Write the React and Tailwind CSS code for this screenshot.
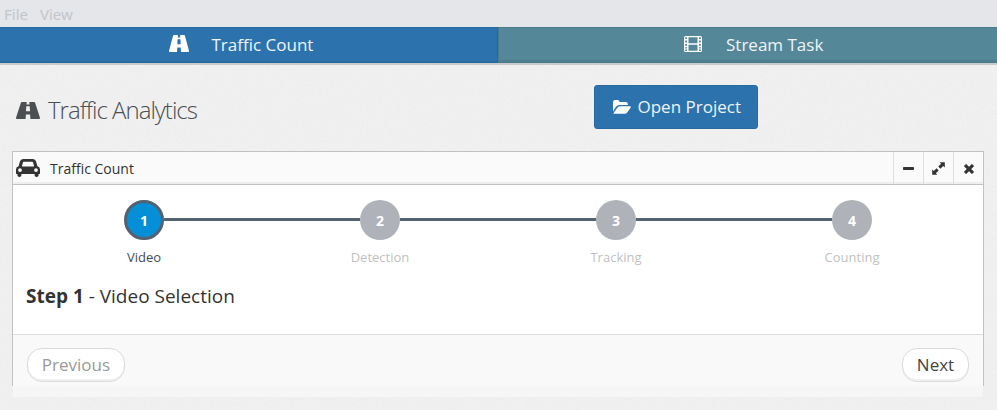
const RoadIcon = ({ className }) => (
  <svg viewBox="0 0 24 17" preserveAspectRatio="none" fill="currentColor" className={className}>
    <path
      fillRule="evenodd"
      d="M5.9 0H10.7L10.5 2.6H13.5L13.3 0H18.1Q18.8 0 19.1 .7L23.9 15.6Q24.2 17 23.2 17H14.4L14.1 12.6H9.9L9.6 17H.8Q-.2 17 .1 15.6L4.9 .7Q5.2 0 5.9 0ZM10.3 4.3L10 8.7Q10 9.3 10.5 9.3H13.5Q14 9.3 14 8.7L13.7 4.3Z"
    />
  </svg>
);

const FilmIcon = ({ className }) => (
  <svg viewBox="0 0 18 16" fill="currentColor" className={className}>
    <path
      fillRule="evenodd"
      d="M1.5 0H16.5Q18 0 18 1.5V14.5Q18 16 16.5 16H1.5Q0 16 0 14.5V1.5Q0 0 1.5 0ZM1.2 1.3V3.1H3V1.3ZM1.2 4.6V6.4H3V4.6ZM1.2 7.9V9.7H3V7.9ZM1.2 11.2V12.5H3V11.2ZM1.2 13.6V15H3V13.6ZM15 1.3V3.1H16.8V1.3ZM15 4.6V6.4H16.8V4.6ZM15 7.9V9.7H16.8V7.9ZM15 11.2V12.5H16.8V11.2ZM15 13.6V15H16.8V13.6ZM4.5 1.3V7.2H13.5V1.3ZM4.5 8.7V14.8H13.5V8.7Z"
    />
  </svg>
);

const FolderIcon = ({ className }) => (
  <svg viewBox="0 0 18 14" fill="currentColor" className={className}>
    <path d="M0 11.6V2Q0 0 2 0H4.6Q6.5 0 6.5 2H12.8Q14.8 2 14.8 4V5H6.5Q4.4 5 3 6.7Z" />
    <path d="M.5 13.2L4.1 8.1Q5.3 6.3 7.2 6.3H17.2Q18.4 6.3 17.7 7.4L14.6 11.9Q13.3 13.8 11.3 13.8H1Q.1 13.8 .5 13.2Z" />
  </svg>
);

const CarIcon = ({ className }) => (
  <svg viewBox="0 0 24 18" fill="currentColor" className={className}>
    <path
      fillRule="evenodd"
      d="M7.2 0H16.8Q19.4 0 20.1 2.6L21.4 7.3Q24 7.8 24 10.5V14.6Q24 15 23.5 15H22.6V16.2Q22.6 18 20.6 18T18.6 16.2V15H5.4V16.2Q5.4 18 3.4 18T1.4 16.2V15H.5Q0 15 0 14.6V10.5Q0 7.8 2.6 7.3L3.9 2.6Q4.6 0 7.2 0ZM7.8 2.8Q7.1 2.8 6.9 3.4L5.9 7.4H18.1L17.1 3.4Q16.9 2.8 16.2 2.8ZM4 9.2A1.9 1.9 0 1 0 4 13A1.9 1.9 0 1 0 4 9.2ZM20 9.2A1.9 1.9 0 1 0 20 13A1.9 1.9 0 1 0 20 9.2Z"
    />
  </svg>
);

const ExpandIcon = () => (
  <svg viewBox="0 0 13 13" fill="currentColor" className="size-[13px]">
    <path d="M7.6 .2H12.8V5.4L11.2 3.9L8.4 6.7L6.3 4.6L9.1 1.8ZM.2 7.6L1.8 9.1L4.6 6.3L6.7 8.4L3.9 11.2L5.4 12.8H.2Z" />
  </svg>
);

const MinusIcon = () => (
  <svg viewBox="0 0 11 3" fill="currentColor" className="h-[3px] w-[11px]">
    <rect width="11" height="3" rx=".8" />
  </svg>
);

const CloseIcon = () => (
  <svg viewBox="0 0 10 10" fill="none" stroke="currentColor" strokeWidth="3.1" className="size-[10px]">
    <path d="M1 1L9 9M9 1L1 9" />
  </svg>
);

const PaperTexture = () => (
  <svg className="absolute inset-0 -z-10 h-full w-full opacity-[0.06]">
    <filter id="paper">
      <feTurbulence type="fractalNoise" baseFrequency="0.45" numOctaves="2" seed="4" />
      <feColorMatrix type="saturate" values="0" />
    </filter>
    <rect width="100%" height="100%" filter="url(#paper)" />
  </svg>
);

const steps = ["Video", "Detection", "Tracking", "Counting"];

function Stepper() {
  return (
    <ol className="grid grid-cols-4 px-[13px] pt-[15px]">
      {steps.map((label, i) => (
        <li key={label} className="flex flex-col items-center">
          <div className="flex w-full items-center">
            <span className={`-mt-px h-[3px] flex-1 ${i > 0 ? "bg-[#546170]" : ""}`} />
            <span
              className={`flex size-10 items-center justify-center rounded-full pt-[2px] text-[14px] font-bold leading-none text-white ${
                i === 0 ? "border-[3px] border-[#546170] bg-[#048fd6]" : "bg-[#afb3b9]"
              }`}
            >
              {i + 1}
            </span>
            <span className={`-mt-px h-[3px] flex-1 ${i < 3 ? "bg-[#546170]" : ""}`} />
          </div>
          <span className={`mt-2 text-[13px] leading-[18px] ${i === 0 ? "text-[#3f4b5b]" : "text-[#bfbfbf]"}`}>
            {label}
          </span>
        </li>
      ))}
    </ol>
  );
}

export default function App() {
  return (
    <div className="relative isolate flex h-[410px] w-full flex-col overflow-hidden bg-[#f1f1f1] font-['Open_Sans',sans-serif] text-[#333]">
      <PaperTexture />
      <div className="flex h-[27px] shrink-0 gap-3 bg-[#e5e6ea] pl-1 pt-1 font-['Noto_Sans',sans-serif] text-[15px] leading-5 text-[#c3c5ca]">
        <span>File</span>
        <span>View</span>
      </div>
      <nav className="grid h-[38px] shrink-0 grid-cols-[498px_1fr] border-b-2 border-[#c8cbcd] text-[17px] leading-[34px] text-[#eef4f9]">
        <a className="flex h-9 border-y border-r border-[#286a9f] bg-[#2c73ad] pl-[169px] shadow-[inset_0_-1px_0_#286a9f]">
          <RoadIcon className="mt-[7px] h-[17px] w-5 text-white" />
          <span className="ml-[22.5px]">Traffic Count</span>
        </a>
        <a className="flex h-9 border-y border-l border-[#497b8b] bg-[#548798] pl-[185px] shadow-[inset_0_-2px_0_#4d7f8f]">
          <FilmIcon className="mt-2 h-4 w-[18px] text-white" />
          <span className="ml-6">Stream Task</span>
        </a>
      </nav>
      <header className="flex h-[86px] shrink-0 items-start">
        <RoadIcon className="ml-4 mt-[37px] h-[17px] w-6 text-[#4b4f53]" />
        <h1 className="ml-2 mt-[28px] w-[546px] text-[24px] font-light leading-[34px] tracking-[-1px] text-[#4b4f53]">
          Traffic Analytics
        </h1>
        <button className="mt-5 flex h-11 w-[164px] rounded-[3px] border border-[#286a9f] bg-[#2c73ad] pl-[18px] text-[17px] leading-[42px] text-[#eef4f9]">
          <FolderIcon className="mt-[14px] h-[14px] w-[18px] text-white" />
          <span className="ml-[6.5px]">Open Project</span>
        </button>
      </header>
      <section className="mx-3 mr-[13px] shrink-0">
        <div className="border border-b-0 border-[#c2c2c2] bg-white">
          <div className="flex h-[33px] border-b border-[#c2c2c2] bg-[#fafafa] shadow-[inset_0_-2px_0_#efefef]">
            <CarIcon className="ml-[3px] mt-[7px] h-[18px] w-6" />
            <h2 className="ml-[10px] flex-1 text-[14px] leading-[33px]">Traffic Count</h2>
            <button className="flex w-[30px] items-center justify-center border-l border-[#dedede]"><MinusIcon /></button>
            <button className="flex w-[30px] items-center justify-center border-l border-[#dedede]"><ExpandIcon /></button>
            <button className="flex w-[30px] items-center justify-center border-l border-[#dedede] pt-px"><CloseIcon /></button>
          </div>
          <div className="h-[149px]">
            <Stepper />
            <p className="ml-[13px] mt-[17px] text-[19px] leading-[26px]">
              <strong>Step 1</strong> - Video Selection
            </p>
          </div>
          <div className="flex h-[52px] items-start justify-between border-t border-[#dddddd] bg-[#f9f9f9] px-[14px] pt-[13px] text-[17px] leading-8">
            <button className="h-[34px] w-[98px] rounded-[15px] border border-[#dadada] bg-white text-[#999] shadow-[inset_0_-2px_0_#f1f1f1]">
              Previous
            </button>
            <button className="h-[34px] w-[67px] rounded-[15px] border border-[#dadada] bg-white text-[#444] shadow-[inset_0_-2px_0_#f1f1f1]">
              Next
            </button>
          </div>
        </div>
        <div className="mx-px h-[11px] bg-[#f6f6f6]" />
      </section>
    </div>
  );
}
